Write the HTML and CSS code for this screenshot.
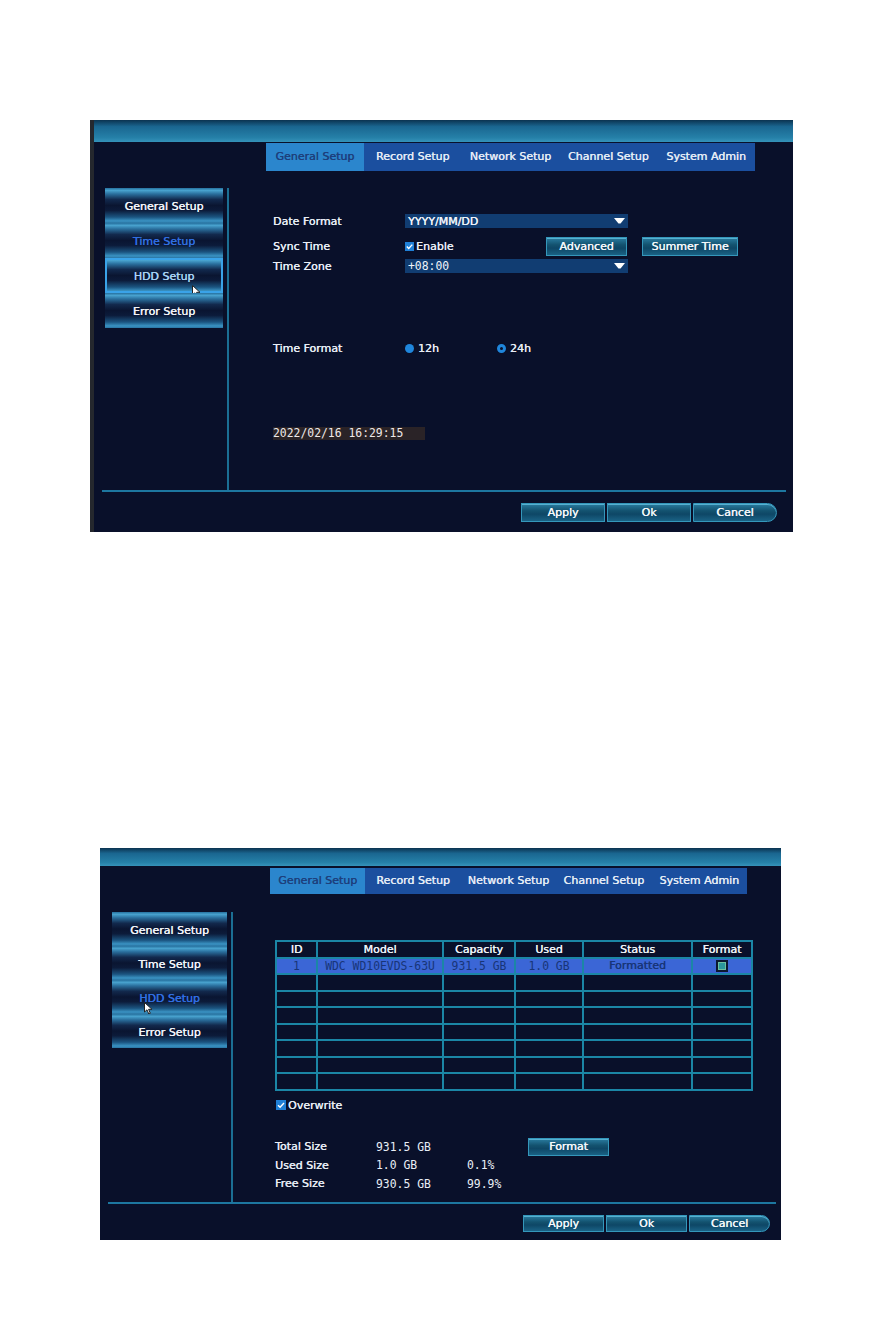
FILE: index.html
```html
<!DOCTYPE html>
<html lang="en">
  <head>
    <meta charset="UTF-8" />
    <meta name="viewport" content="width=device-width, initial-scale=1.0" />
    <title>DVR Setup</title>
    <link rel="stylesheet" href="styles.css">
  </head>
  <body>
    <!-- Time setup screen -->
    <div class="shot shot-time">
      <div class="titlebar"></div>
      <div class="tabs">
        <div class="tab active">General Setup</div>
        <div class="tab">Record Setup</div>
        <div class="tab">Network Setup</div>
        <div class="tab">Channel Setup</div>
        <div class="tab">System Admin</div>
      </div>
      <div class="main">
        <div class="side">
          <div class="side-item">General Setup</div>
          <div class="side-item selected">Time Setup</div>
          <div class="side-item focus">HDD Setup
            <svg class="cursor cursor-time" width="9" height="13" viewBox="0 0 9 13"><path d="M0.5 0.5 L0.5 10 L3 7.8 L4.8 12 L6.3 11.3 L4.6 7.3 L8 7.3 Z" fill="#fff" stroke="#222" stroke-width="1"/></svg>
          </div>
          <div class="side-item">Error Setup</div>
        </div>
        <div class="vline"></div>
        <div class="content">
          <div class="row row-date">
            <span class="label">Date Format</span>
            <div class="select">
              <span>YYYY/MM/DD</span>
              <svg class="arrow" width="11" height="6" viewBox="0 0 11 6"><path d="M0 0 H11 L6.5 5.5 H4.5 Z" fill="#fff"/></svg>
            </div>
          </div>
          <div class="row row-sync">
            <span class="label">Sync Time</span>
            <span class="check">
              <svg width="9" height="9" viewBox="0 0 9 9"><rect width="9" height="9" fill="#1f7fd6"/><path d="M1.8 4.6 L3.7 6.5 L7.3 2.6" fill="none" stroke="#fff" stroke-width="1.4"/></svg>
              Enable
            </span>
            <button class="btn btn-advanced">Advanced</button>
            <button class="btn btn-summer">Summer Time</button>
          </div>
          <div class="row row-zone">
            <span class="label">Time Zone</span>
            <div class="select">
              <span class="mono">+08:00</span>
              <svg class="arrow" width="11" height="6" viewBox="0 0 11 6"><path d="M0 0 H11 L6.5 5.5 H4.5 Z" fill="#fff"/></svg>
            </div>
          </div>
          <div class="row row-format">
            <span class="label">Time Format</span>
            <span class="radio"><span class="dot"></span>12h</span>
            <span class="radio"><span class="dot ring"></span>24h</span>
          </div>
          <div class="clock mono">2022/02/16 16:29:15</div>
        </div>
      </div>
      <div class="hline"></div>
      <div class="footer">
        <button class="btn">Apply</button>
        <button class="btn">Ok</button>
        <button class="btn btn-last">Cancel</button>
      </div>
    </div>

    <!-- HDD setup screen -->
    <div class="shot shot-hdd">
      <div class="titlebar"></div>
      <div class="tabs">
        <div class="tab active">General Setup</div>
        <div class="tab">Record Setup</div>
        <div class="tab">Network Setup</div>
        <div class="tab">Channel Setup</div>
        <div class="tab">System Admin</div>
      </div>
      <div class="main">
        <div class="side">
          <div class="side-item">General Setup</div>
          <div class="side-item">Time Setup</div>
          <div class="side-item selected">HDD Setup
            <svg class="cursor cursor-hdd" width="9" height="13" viewBox="0 0 9 13"><path d="M0.5 0.5 L0.5 10 L3 7.8 L4.8 12 L6.3 11.3 L4.6 7.3 L8 7.3 Z" fill="#fff" stroke="#222" stroke-width="1"/></svg>
          </div>
          <div class="side-item">Error Setup</div>
        </div>
        <div class="vline"></div>
        <div class="content">
          <table class="disks">
            <tr>
              <th>ID</th><th>Model</th><th>Capacity</th><th>Used</th><th>Status</th><th>Format</th>
            </tr>
            <tr class="sel">
              <td class="mono">1</td>
              <td class="mono">WDC WD10EVDS-63U</td>
              <td class="mono">931.5 GB</td>
              <td class="mono">1.0 GB</td>
              <td>Formatted</td>
              <td><span class="fmt-box"></span></td>
            </tr>
            <tr><td></td><td></td><td></td><td></td><td></td><td></td></tr>
            <tr><td></td><td></td><td></td><td></td><td></td><td></td></tr>
            <tr><td></td><td></td><td></td><td></td><td></td><td></td></tr>
            <tr><td></td><td></td><td></td><td></td><td></td><td></td></tr>
            <tr><td></td><td></td><td></td><td></td><td></td><td></td></tr>
            <tr><td></td><td></td><td></td><td></td><td></td><td></td></tr>
            <tr><td></td><td></td><td></td><td></td><td></td><td></td></tr>
          </table>
          <div class="overwrite">
            <svg width="10" height="10" viewBox="0 0 10 10"><rect width="10" height="10" fill="#1f7fd6"/><path d="M2 5.2 L4.1 7.2 L8 3" fill="none" stroke="#fff" stroke-width="1.4"/></svg>
            Overwrite
          </div>
          <div class="stats">
            <span class="label">Total Size</span>
            <span class="mono">931.5 GB</span>
            <span></span>
            <button class="btn btn-format">Format</button>
            <span class="label">Used Size</span>
            <span class="mono">1.0 GB</span>
            <span class="mono">0.1%</span>
            <span></span>
            <span class="label">Free Size</span>
            <span class="mono">930.5 GB</span>
            <span class="mono">99.9%</span>
            <span></span>
          </div>
        </div>
      </div>
      <div class="hline"></div>
      <div class="footer">
        <button class="btn">Apply</button>
        <button class="btn">Ok</button>
        <button class="btn btn-last">Cancel</button>
      </div>
    </div>
  </body>
</html>
```

FILE: styles.css
```css
body {
  margin: 0;
  background: #fff;
  font-family: "DejaVu Sans", Verdana, sans-serif;
  font-size: 11px;
  color: #e8eef6;
}
.shot,
.btn {
  text-shadow: 0.35px 0 0 currentColor;
}
.mono {
  font-family: "DejaVu Sans Mono", "Liberation Mono", monospace;
  font-size: 11.4px;
  text-shadow: none;
}
.shot {
  position: relative;
  display: flex;
  flex-direction: column;
  box-sizing: border-box;
  background: #09102a;
}
.shot-time {
  width: 703px;
  height: 412px;
  margin: 120px 0 0 90px;
  border-left: 4px solid #25282e;
}
.shot-hdd {
  width: 681px;
  height: 392px;
  margin: 316px 0 0 100px;
}
.titlebar {
  background: linear-gradient(#0b3350, #1a6690 30%, #2580a8 80%, #3593ba);
}
.shot-time .titlebar {
  height: 22px;
}
.shot-hdd .titlebar {
  height: 18px;
}

/* tabs */
.tabs {
  display: flex;
  align-self: flex-start;
  background: #1b4f9f;
}
.tab {
  text-align: center;
  color: #e4ecf6;
  white-space: nowrap;
}
.tab.active {
  background: #2b86cd;
  color: #1d3f7c;
}
.shot-time .tabs {
  margin: 1px 0 0 172px;
}
.shot-time .tab {
  width: 97.8px;
  line-height: 28px;
}
.shot-hdd .tabs {
  margin: 2px 0 0 170px;
}
.shot-hdd .tab {
  width: 95.4px;
  line-height: 26px;
}

/* side menu */
.main {
  display: flex;
}
.shot-time .main {
  margin-top: 17px;
  height: 302px;
}
.shot-hdd .main {
  margin-top: 18px;
  height: 290px;
}
.side {
  display: flex;
  flex-direction: column;
}
.shot-time .side {
  margin-left: 11px;
  width: 118px;
}
.shot-hdd .side {
  margin-left: 12px;
  width: 115px;
}
.side-item {
  position: relative;
  display: flex;
  align-items: center;
  justify-content: center;
  box-sizing: border-box;
  padding-top: 2px;
  color: #f2f5fa;
  background: linear-gradient(
    #25709e 0%,
    #48a2ce 7%,
    #2a6f9d 17%,
    #12294d 33%,
    #0a1531 50%,
    #0c1b3a 64%,
    #1b5480 83%,
    #3a93c3 94%,
    #2a74a2 100%
  );
}
.shot-time .side-item {
  height: 35px;
}
.shot-hdd .side-item {
  height: 34px;
}
.side-item.selected {
  color: #3170e2;
}
.side-item.focus {
  box-shadow: inset 0 0 0 2px #3aa3e8;
  color: #a8d4f6;
}
.cursor {
  position: absolute;
}
.cursor-time {
  left: 87px;
  top: 27px;
}
.cursor-hdd {
  left: 32px;
  top: 22px;
}
.vline {
  width: 2px;
  margin-left: 4px;
  background: #1b6f94;
}
.content {
  flex: 1;
}
.shot-time .content {
  padding: 26px 0 0 44px;
}
.shot-hdd .content {
  padding: 28px 0 0 42px;
}

/* time form */
.row {
  display: flex;
  align-items: center;
}
.row .label {
  width: 132px;
}
.row-date {
  height: 14px;
}
.row-sync {
  height: 20px;
  margin-top: 8px;
}
.row-zone {
  height: 14px;
  margin-top: 3px;
}
.row-format {
  height: 14px;
  margin-top: 68px;
}
.select {
  display: flex;
  align-items: center;
  justify-content: space-between;
  box-sizing: border-box;
  width: 223px;
  height: 14px;
  padding: 0 3px 0 3px;
  background: #113d72;
  color: #f0f4fa;
}
.check {
  display: flex;
  align-items: center;
  gap: 2px;
  width: 141px;
}
.radio {
  display: flex;
  align-items: center;
  gap: 4px;
  width: 92px;
}
.dot {
  width: 9px;
  height: 9px;
  border-radius: 50%;
  background: #1f86dc;
}
.dot.ring {
  box-sizing: border-box;
  width: 9px;
  height: 9px;
  border: 3px solid #1f86dc;
  background: #09102a;
}
.clock {
  width: 152px;
  height: 13px;
  line-height: 13px;
  margin-top: 72px;
  background: #2a2327;
  color: #efe8e8;
}

/* buttons */
.btn {
  box-sizing: border-box;
  margin: 0;
  padding: 0;
  border: 1px solid #3497bb;
  background: linear-gradient(#2a7ca0, #13526f 40%, #0e4766 60%, #1a6285);
  box-shadow: inset 0 1px 0 #56b0d0;
  color: #f4f8fb;
  font-family: "DejaVu Sans", Verdana, sans-serif;
  font-size: 11px;
}
.btn-advanced {
  width: 81px;
  height: 19px;
}
.btn-summer {
  width: 96px;
  height: 19px;
  margin-left: 15px;
}
.btn-format {
  width: 81px;
  height: 18px;
}
.footer {
  display: flex;
  justify-content: flex-end;
  gap: 2px;
}
.shot-time .footer {
  margin-top: 11px;
  padding-right: 16px;
}
.shot-time .footer .btn {
  width: 84px;
  height: 19px;
}
.shot-hdd .footer {
  margin-top: 11px;
  padding-right: 11px;
}
.shot-hdd .footer .btn {
  width: 81px;
  height: 17px;
}
.btn-last {
  border-radius: 0 10px 10px 0;
}
.hline {
  height: 2px;
  background: #1d77a0;
}
.shot-time .hline {
  margin: 0 7px 0 8px;
}
.shot-hdd .hline {
  margin: 0 5px 0 8px;
}

/* hdd table */
.disks {
  border-collapse: collapse;
  width: 478px;
  table-layout: fixed;
}
.disks th,
.disks td {
  height: 14.5px;
  padding: 0;
  border: 2px solid #1b86a6;
  text-align: center;
  font-weight: normal;
  overflow: hidden;
  white-space: nowrap;
}
.disks th:nth-child(1) { width: 39px; }
.disks th:nth-child(2) { width: 124px; }
.disks th:nth-child(3) { width: 70px; }
.disks th:nth-child(4) { width: 66px; }
.disks th:nth-child(5) { width: 107px; }
.disks th:nth-child(6) { width: 58px; }
.disks th {
  color: #eef3f8;
}
.disks .sel td {
  background: #3b66d6;
  color: #183578;
}
.fmt-box {
  display: inline-block;
  box-sizing: border-box;
  width: 12px;
  height: 12px;
  vertical-align: middle;
  border: 2px solid #0b1830;
  background: #2b979c;
  box-shadow: inset 0 0 0 1px #6cbfa0;
}
.overwrite {
  display: flex;
  align-items: center;
  gap: 2px;
  height: 11px;
  margin: 9px 0 0 1px;
}
.stats {
  display: grid;
  grid-template-columns: 101px 91px 61px 81px;
  grid-auto-rows: 18.5px;
  align-items: center;
  margin-top: 27px;
}
.stats .label {
  color: #e6ecf4;
}
```
